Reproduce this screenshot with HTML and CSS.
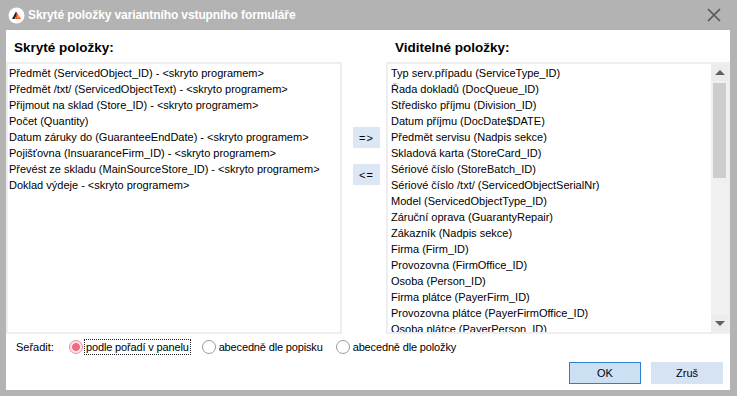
FILE: index.html
```html
<!DOCTYPE html>
<html lang="cs">
<head>
<meta charset="utf-8">
<title>Skryté položky</title>
<link rel="stylesheet" href="styles.css">
</head>
<body>
<div class="window">
  <div class="titlebar">
    <svg class="logo" width="17" height="17" viewBox="0 0 17 17">
      <circle cx="8.5" cy="8.5" r="8" fill="#fff"/>
      <path d="M4 12 L8 4.5 L9.5 7 L6.5 12 Z" fill="#222"/>
      <path d="M8.6 5.8 L13.2 12 L7.2 12 Z" fill="#e9472b"/>
      <path d="M9.6 7.4 L12.2 11.2 L8.6 11.2 Z" fill="#f6a21e"/>
    </svg>
    <span class="title">Skryté položky variantního vstupního formuláře</span>
    <svg class="close" width="16" height="16" viewBox="0 0 16 16">
      <path d="M2 2 L14 14 M14 2 L2 14" stroke="#555" stroke-width="1.6"/>
    </svg>
  </div>
  <div class="content">
    <div class="headings">
      <h2 class="heading left">Skryté položky:</h2>
      <div></div>
      <h2 class="heading right">Viditelné položky:</h2>
    </div>
    <div class="panes">
      <ul class="list">
        <li>Předmět (ServicedObject_ID) - &lt;skryto programem&gt;</li>
        <li>Předmět /txt/ (ServicedObjectText) - &lt;skryto programem&gt;</li>
        <li>Přijmout na sklad (Store_ID) - &lt;skryto programem&gt;</li>
        <li>Počet (Quantity)</li>
        <li>Datum záruky do (GuaranteeEndDate) - &lt;skryto programem&gt;</li>
        <li>Pojišťovna (InsuaranceFirm_ID) - &lt;skryto programem&gt;</li>
        <li>Převést ze skladu (MainSourceStore_ID) - &lt;skryto programem&gt;</li>
        <li>Doklad výdeje - &lt;skryto programem&gt;</li>
      </ul>
      <div class="movers">
        <button class="mover">=&gt;</button>
        <button class="mover">&lt;=</button>
      </div>
      <div class="list scrolled">
        <ul class="items">
          <li>Typ serv.případu (ServiceType_ID)</li>
          <li>Řada dokladů (DocQueue_ID)</li>
          <li>Středisko příjmu (Division_ID)</li>
          <li>Datum příjmu (DocDate$DATE)</li>
          <li>Předmět servisu (Nadpis sekce)</li>
          <li>Skladová karta (StoreCard_ID)</li>
          <li>Sériové číslo (StoreBatch_ID)</li>
          <li>Sériové číslo /txt/ (ServicedObjectSerialNr)</li>
          <li>Model (ServicedObjectType_ID)</li>
          <li>Záruční oprava (GuarantyRepair)</li>
          <li>Zákazník (Nadpis sekce)</li>
          <li>Firma (Firm_ID)</li>
          <li>Provozovna (FirmOffice_ID)</li>
          <li>Osoba (Person_ID)</li>
          <li>Firma plátce (PayerFirm_ID)</li>
          <li>Provozovna plátce (PayerFirmOffice_ID)</li>
          <li>Osoba plátce (PayerPerson_ID)</li>
        </ul>
        <div class="scrollbar">
          <div class="sb-btn"><span class="tri up"></span></div>
          <div class="sb-track"><div class="sb-thumb"></div></div>
          <div class="sb-btn"><span class="tri down"></span></div>
        </div>
      </div>
    </div>
    <div class="sort-row">
      <span class="sort-label">Seřadit:</span>
      <label class="radio checked"><span class="dot"></span><span class="rlabel focus">podle pořadí v panelu</span></label>
      <label class="radio"><span class="dot"></span><span class="rlabel">abecedně dle popisku</span></label>
      <label class="radio"><span class="dot"></span><span class="rlabel">abecedně dle položky</span></label>
    </div>
    <div class="button-row">
      <button class="btn primary">OK</button>
      <button class="btn">Zruš</button>
    </div>
  </div>
</div>
</body>
</html>
```
FILE: styles.css
```css
* { box-sizing: border-box; }
html, body { margin: 0; padding: 0; }
body {
  width: 737px;
  height: 396px;
  overflow: hidden;
  background: #b3b3b3;
  font-family: "Liberation Sans", Arial, sans-serif;
  font-size: 11px;
  color: #000;
}
.window { width: 737px; height: 396px; }
.titlebar {
  height: 30px;
  display: flex;
  align-items: center;
  padding-left: 8px;
}
.logo { flex: none; }
.title {
  margin-left: 3px;
  color: #fff;
  font-weight: bold;
  font-size: 12px;
  letter-spacing: -0.1px;
}
.close { margin-left: auto; margin-right: 15px; }
.content {
  margin-left: 6px;
  width: 724px;
  height: 360px;
  background: #fff;
  display: flex;
  flex-direction: column;
}
.headings {
  height: 32px;
  display: grid;
  grid-template-columns: 336px 44px 344px;
  align-items: center;
}
.heading {
  margin: 0;
  font-size: 13.5px;
  font-weight: bold;
  padding-top: 2px;
}
.heading.left { padding-left: 8px; }
.heading.right { padding-left: 9px; }
.panes {
  height: 272px;
  display: grid;
  grid-template-columns: 336px 44px 344px;
}
.list {
  margin: 0;
  padding: 1px 0 0 1px;
  list-style: none;
  border: 2px solid #eeeeee;
  overflow: hidden;
  height: 272px;
}
.list li, .items li {
  height: 16px;
  line-height: 16px;
  white-space: nowrap;
}
.scrolled {
  display: flex;
  padding: 0;
}
.items {
  flex: 1;
  margin: 0;
  padding: 1px 0 0 3px;
  list-style: none;
  overflow: hidden;
}
.scrollbar {
  width: 17px;
  display: flex;
  flex-direction: column;
  background: #f0f0f0;
}
.sb-btn {
  height: 17px;
  display: flex;
  align-items: center;
  justify-content: center;
  background: #ececec;
}
.tri { width: 0; height: 0; border-left: 5px solid transparent; border-right: 5px solid transparent; }
.tri.up { border-bottom: 5px solid #606060; }
.tri.down { border-top: 5px solid #606060; }
.sb-track { flex: 1; padding: 2px 2px 0; }
.sb-thumb { height: 95px; background: #cdcdcd; }
.movers {
  display: flex;
  flex-direction: column;
  align-items: flex-start;
  padding-top: 65px;
  padding-left: 11px;
  gap: 16px;
}
.mover {
  width: 27px;
  height: 21px;
  border: 0;
  background: #dce6f4;
  font-family: inherit;
  font-size: 11px;
  padding: 0;
  letter-spacing: 1px;
}
.sort-row {
  height: 26px;
  display: flex;
  align-items: center;
  padding-left: 10px;
}
.sort-label { width: 53px; }
.radio {
  display: flex;
  align-items: center;
  margin-right: 11px;
}
.dot {
  width: 14px;
  height: 14px;
  border-radius: 50%;
  border: 1px solid #9a9a9a;
  background: #fff;
  margin-right: 1px;
}
.radio.checked .dot {
  border-color: #ef8ea0;
  background: radial-gradient(circle, #f06b84 0 3.6px, #fbe2e7 4.2px);
}
.rlabel { padding: 1px 1px; border: 1px dotted transparent; letter-spacing: -0.15px; }
.rlabel.focus { border-color: #222; }
.button-row {
  display: flex;
  justify-content: flex-end;
  padding-top: 2px;
  padding-right: 7px;
  gap: 10px;
}
.btn {
  width: 72px;
  height: 22px;
  border: 1px solid #d5e3f3;
  background: #d5e3f3;
  font-family: inherit;
  font-size: 11px;
  padding: 0;
}
.btn.primary {
  border-color: #2f7fd0;
  background: #cce0f4;
}
```
